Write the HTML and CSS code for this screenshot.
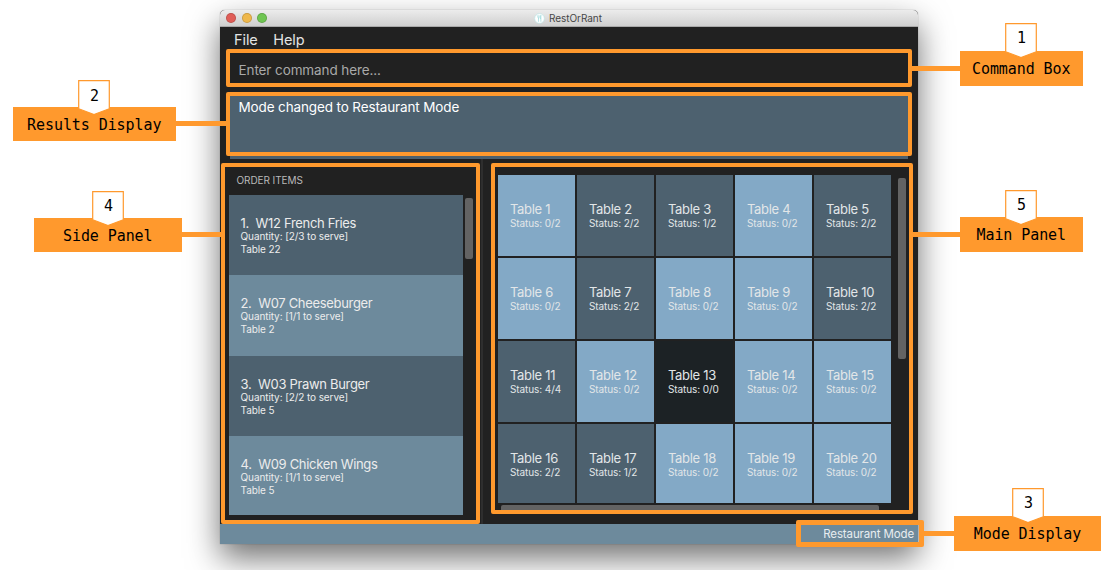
FILE: index.html
```html
<!DOCTYPE html>
<html lang="en">
<head>
<meta charset="utf-8">
<title>RestOrRant</title>
<link rel="stylesheet" href="styles.css">
</head>
<body>
<main class="window">
  <header class="titlebar">
    <div class="lights"><i class="light red"></i><i class="light yellow"></i><i class="light green"></i></div>
    <div class="title">
      <svg class="logo" viewBox="0 0 12 12"><circle cx="6" cy="6" r="5.3" fill="#fff" stroke="#bfe6e6" stroke-width=".8"/><path d="M4.2 2.5v2.2q0 .7.7.7v4.2M5.5 2.5v2.2q0 .7-.6.7M7.5 9.6V2.5q-.9 1.2-.7 3.6h.7" fill="none" stroke="#8fd3d6" stroke-width=".7"/></svg>
      <span>RestOrRant</span>
    </div>
  </header>
  <nav class="menu"><span>File</span><span>Help</span></nav>
  <div class="command">Enter command here...</div>
  <div class="results">Mode changed to Restaurant Mode</div>
  <div class="content">
    <section class="side">
      <h2 class="heading">ORDER ITEMS</h2>
      <div class="side-row">
        <div class="list">
          <article class="item"><h3>1.&nbsp; W12 French Fries</h3><p>Quantity: [2/3 to serve]</p><p>Table 22</p></article>
          <article class="item alt"><h3>2.&nbsp; W07 Cheeseburger</h3><p>Quantity: [1/1 to serve]</p><p>Table 2</p></article>
          <article class="item"><h3>3.&nbsp; W03 Prawn Burger</h3><p>Quantity: [2/2 to serve]</p><p>Table 5</p></article>
          <article class="item alt"><h3>4.&nbsp; W09 Chicken Wings</h3><p>Quantity: [1/1 to serve]</p><p>Table 5</p></article>
        </div>
        <div class="thumb side-thumb"></div>
      </div>
    </section>
    <div class="divider"></div>
    <section class="main">
      <div class="main-col">
        <div class="grid">
          <div class="table free"><h3>Table 1</h3><p>Status: 0/2</p></div>
          <div class="table"><h3>Table 2</h3><p>Status: 2/2</p></div>
          <div class="table"><h3>Table 3</h3><p>Status: 1/2</p></div>
          <div class="table free"><h3>Table 4</h3><p>Status: 0/2</p></div>
          <div class="table"><h3>Table 5</h3><p>Status: 2/2</p></div>
          <div class="table free"><h3>Table 6</h3><p>Status: 0/2</p></div>
          <div class="table"><h3>Table 7</h3><p>Status: 2/2</p></div>
          <div class="table free"><h3>Table 8</h3><p>Status: 0/2</p></div>
          <div class="table free"><h3>Table 9</h3><p>Status: 0/2</p></div>
          <div class="table"><h3>Table 10</h3><p>Status: 2/2</p></div>
          <div class="table"><h3>Table 11</h3><p>Status: 4/4</p></div>
          <div class="table free"><h3>Table 12</h3><p>Status: 0/2</p></div>
          <div class="table closed"><h3>Table 13</h3><p>Status: 0/0</p></div>
          <div class="table free"><h3>Table 14</h3><p>Status: 0/2</p></div>
          <div class="table free"><h3>Table 15</h3><p>Status: 0/2</p></div>
          <div class="table"><h3>Table 16</h3><p>Status: 2/2</p></div>
          <div class="table"><h3>Table 17</h3><p>Status: 1/2</p></div>
          <div class="table free"><h3>Table 18</h3><p>Status: 0/2</p></div>
          <div class="table free"><h3>Table 19</h3><p>Status: 0/2</p></div>
          <div class="table free"><h3>Table 20</h3><p>Status: 0/2</p></div>
        </div>
        <div class="thumb h-thumb"></div>
      </div>
      <div class="thumb v-thumb"></div>
    </section>
  </div>
  <footer class="status">Restaurant Mode</footer>
</main>

<div class="outline o-command"></div>
<div class="outline o-results"></div>
<div class="outline o-side"></div>
<div class="outline o-main"></div>
<div class="outline o-mode"></div>
<div class="link l-command"></div>
<div class="link l-results"></div>
<div class="link l-side"></div>
<div class="link l-main"></div>
<div class="link l-mode"></div>

<div class="callout c-command"><svg class="tag" viewBox="0 0 32 36"><path d="M.7.7h30.6v28L16 34.6.7 28.700z"/><text x="16.500" y="20">1</text></svg>Command Box</div>
<div class="callout c-results"><svg class="tag" viewBox="0 0 32 36"><path d="M.7.7h30.6v28L16 34.6.7 28.700z"/><text x="16.500" y="20.500">2</text></svg>Results Display</div>
<div class="callout c-mode"><svg class="tag" viewBox="0 0 32 36"><path d="M.7.7h30.6v28L16 34.6.7 28.700z"/><text x="16.500" y="20">3</text></svg>Mode Display</div>
<div class="callout c-side"><svg class="tag" viewBox="0 0 32 36"><path d="M.7.7h30.6v28L16 34.6.7 28.700z"/><text x="16.500" y="19.500">4</text></svg>Side Panel</div>
<div class="callout c-main"><svg class="tag" viewBox="0 0 32 36"><path d="M.7.7h30.6v28L16 34.6.7 28.700z"/><text x="16.500" y="20">5</text></svg>Main Panel</div>
</body>
</html>
```
FILE: styles.css
```css
* { box-sizing: border-box; }
html, body { margin: 0; height: 570px; overflow: hidden; background: #fff; }
body { position: relative; padding: 10px 0 0 220px; font-family: Inter, "Open Sans", sans-serif; }
h2, h3, p { margin: 0; font-weight: 400; }

.window { display: flex; flex-direction: column; width: 698px; height: 533.5px; background: #212121; border-radius: 5px 5px 0 0; box-shadow: 0 0 1px rgba(0,0,0,.5), 0 14px 32px rgba(0,0,0,.56); }
.titlebar { display: flex; align-items: center; height: 17px; padding-left: 6px; flex: none; background: linear-gradient(#ececec, #cfcfcf); border-bottom: 1px solid #a9a9a9; border-radius: 5px 5px 0 0; }
.lights { display: flex; gap: 5.5px; width: 308px; }
.light { width: 10px; height: 10px; border-radius: 50%; border: .5px solid rgba(0,0,0,.15); }
.red { background: #e05e58; }
.yellow { background: #efb84c; }
.green { background: #6fc552; }
.title { display: flex; align-items: center; gap: 4px; font-size: 10px; line-height: 16px; letter-spacing: -.05px; color: #474747; }
.logo { width: 11px; height: 11px; }
.menu { display: flex; gap: 15.500px; height: 25px; padding-left: 14px; font-size: 14.500px; line-height: 26px; letter-spacing: -.08px; color: #e4e4e4; flex: none; }
.command { height: 43px; padding-left: 18.500px; flex: none; font-size: 13.500px; line-height: 37px; letter-spacing: -.1px; color: #a9a9a9; }
.results { height: 64px; margin: 0 10px; padding-left: 8.500px; flex: none; background: #4d616f; color: #fff; font-size: 13.500px; line-height: 24px; letter-spacing: -.13px; }
.content { display: flex; height: 365px; flex: none; }
.side { width: 261px; padding-left: 9px; }
.heading { height: 36px; padding-left: 7.500px; font-size: 10px; line-height: 43px; letter-spacing: -.08px; color: #b9b9b9; }
.side-row { display: flex; gap: 2.500px; }
.list { width: 233.500px; }
.item { height: 80.300px; padding: 19px 0 0 11.500px; background: #4d616f; color: #ececec; }
.item.alt { background: #6d8a9c; }
.item:last-child { height: 79.600px; }
.item h3, .table h3 { font-size: 13px; line-height: 17px; letter-spacing: -.32px; }
.item h3 { padding-top: 1px; margin-bottom: -2px; }
.table h3 { margin-bottom: -1px; }
.item p, .table p { font-size: 10px; line-height: 13px; letter-spacing: -.09px; }
.thumb { background: #636363; border-radius: 2px; }
.side-thumb { width: 8px; height: 61px; margin-top: 2.500px; }
.divider { width: 2px; background: #2e2e2e; }
.main { display: flex; gap: 7px; padding: 16px 0 0 15px; }
.main-col { display: flex; flex-direction: column; gap: 2px; }
.grid { display: grid; grid-template-columns: repeat(5, 77px); grid-template-rows: 81px 81px 81px 79px; gap: 2px; }
.table { padding: 26px 0 0 12px; background: #4d616f; color: #e2e6e8; }
.table.free { background: #83a9c6; }
.table.closed { background: #1c2225; }
.h-thumb { width: 378px; height: 7px; margin-left: 3px; }
.v-thumb { width: 8px; height: 181px; margin-top: 3px; }
.status { flex: 1; padding-right: 4px; background: #6d8a9c; color: #e8edf0; font-size: 11.500px; line-height: 20px; letter-spacing: -.13px; text-align: right; }

/* Annotation layer over the window */
.outline { position: absolute; border: 4px solid #ff992d; border-radius: 2px; }
.o-command { left: 226px; top: 49px; width: 686px; height: 38px; }
.o-results { left: 226px; top: 91.500px; width: 686px; height: 64px; }
.o-side { left: 221px; top: 163px; width: 258.500px; height: 361px; }
.o-main { left: 491px; top: 163px; width: 422px; height: 350.500px; }
.o-mode { left: 796px; top: 520px; width: 128px; height: 26.500px; border-width: 5px; }
.link { position: absolute; height: 5px; background: #ff992d; }
.l-command { left: 912px; top: 65.500px; width: 48px; }
.l-results { left: 175px; top: 121.400px; width: 52px; }
.l-side { left: 181px; top: 232.400px; width: 41px; }
.l-main { left: 912px; top: 232.400px; width: 48px; }
.l-mode { left: 923px; top: 531px; width: 32px; }
.callout { position: absolute; height: 34.500px; background: #ff992d; color: #000; font: 15px/36px "DejaVu Sans Mono", monospace; letter-spacing: -.08px; text-align: center; white-space: nowrap; }
.c-command { left: 959.500px; top: 51px; width: 123.500px; }
.c-results { left: 13px; top: 106.500px; width: 162.500px; }
.c-mode { left: 954px; top: 516px; width: 147px; }
.c-side { left: 34px; top: 217.500px; width: 147.500px; }
.c-main { left: 959.500px; top: 217px; width: 123.500px; }
.tag { position: absolute; left: 50%; top: -28.500px; width: 32px; height: 36px; margin-left: -16px; }
.c-results .tag, .c-side .tag, .c-main .tag { top: -27px; }
.tag path { fill: #fff; stroke: #ff992d; stroke-width: 1.200; }
.tag text { font: 15px "DejaVu Sans Mono", monospace; text-anchor: middle; fill: #000; }
```
